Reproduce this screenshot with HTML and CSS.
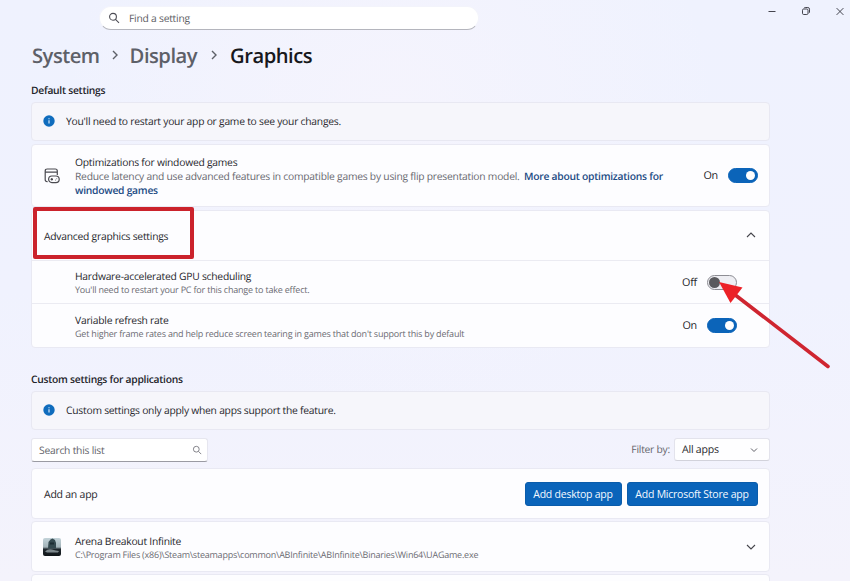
FILE: index.html
```html
<!DOCTYPE html>
<html lang="en">
<head>
<meta charset="utf-8">
<title>Graphics settings</title>
<link rel="stylesheet" href="styles.css">
</head>
<body>
<div class="window">
  <header class="titlebar">
    <div class="find">
      <svg class="find-icon" viewBox="0 0 12 12"><circle cx="5" cy="4.8" r="3.4"/><path d="M7.5 7.3 11 10.8"/></svg>
      <span>Find a setting</span>
    </div>
    <div class="controls">
      <svg viewBox="0 0 10 10"><path d="M1.5 5.5h7"/></svg>
      <svg viewBox="0 0 10 10"><rect x="1.5" y="3" width="5.5" height="5.5" rx="1.2"/><path d="M3 2.2Q3.3 1.5 4.2 1.5H6.8Q8.5 1.5 8.5 3.2V6Q8.5 6.8 7.8 7.1"/></svg>
      <svg viewBox="0 0 10 10"><path d="M1.6 2.1 8.4 8.9M8.4 2.1 1.6 8.9"/></svg>
    </div>
  </header>

  <main class="content">
    <nav class="crumbs">
      <span>System</span>
      <svg viewBox="0 0 8 10"><path d="M2 1 6 5 2 9"/></svg>
      <span>Display</span>
      <svg class="second" viewBox="0 0 8 10"><path d="M2 1 6 5 2 9"/></svg>
      <span class="current">Graphics</span>
    </nav>

    <h2 class="section-title">Default settings</h2>
    <div class="info">
      <svg class="info-icon" viewBox="0 0 12 12"><circle cx="6" cy="6" r="5.7"/><path d="M6 5.3v3.3M6 3.2v1.1"/></svg>
      <span>You'll need to restart your app or game to see your changes.</span>
    </div>

    <section class="card optimizations">
      <svg class="game-icon" viewBox="0 0 16 16"><path d="M3.6 13.7H3.2Q1.2 13.7 1.2 11.7V3Q1.2 1 3.2 1H11.3Q13.3 1 13.3 3V7M1.2 4.2H13.3"/><rect x="4.6" y="8" width="10.6" height="6.6" rx="3.3"/><path d="M6.6 11.3H9M7.8 10.1V12.5"/><path d="M11.3 12.2h.5M12.6 10.6h.5"/></svg>
      <div class="text">
        <div class="label">Optimizations for windowed games</div>
        <div class="desc"><span>Reduce latency and use advanced features in compatible games by using flip presentation model.</span> <a class="link">More about optimizations for</a></div>
        <div class="desc"><a class="link">windowed games</a></div>
      </div>
      <div class="switch-group"><span>On</span><i class="switch on"></i></div>
    </section>

    <section class="card expander">
      <div class="expander-head">
        <span>Advanced graphics settings</span>
        <svg class="chevron" viewBox="0 0 10 8"><path d="M1 6 5 2 9 6"/></svg>
        <div class="highlight"></div>
      </div>
      <div class="row">
        <div class="text">
          <div class="label">Hardware-accelerated GPU scheduling</div>
          <div class="sub">You'll need to restart your PC for this change to take effect.</div>
        </div>
        <div class="switch-group"><span>Off</span><i class="switch"></i></div>
        <svg class="pointer" viewBox="0 0 120 94"><path class="shaft" d="M15 12 109 84.500"/><path class="head" d="M0 0 23.500 5.500 11.500 21Z"/></svg>
      </div>
      <div class="row">
        <div class="text">
          <div class="label">Variable refresh rate</div>
          <div class="sub">Get higher frame rates and help reduce screen tearing in games that don't support this by default</div>
        </div>
        <div class="switch-group"><span>On</span><i class="switch on"></i></div>
      </div>
    </section>

    <h2 class="section-title custom-title">Custom settings for applications</h2>
    <div class="info">
      <svg class="info-icon" viewBox="0 0 12 12"><circle cx="6" cy="6" r="5.700"/><path d="M6 5.300v3.300M6 3.200v1.100"/></svg>
      <span class="lower">Custom settings only apply when apps support the feature.</span>
    </div>

    <div class="tools">
      <div class="search-list">
        <span>Search this list</span>
        <svg viewBox="0 0 10 10"><circle cx="4.300" cy="4.200" r="2.900"/><path d="M6.400 6.300 9.200 9.100"/></svg>
      </div>
      <div class="filter">
        <span class="filter-label">Filter by:</span>
        <div class="select"><span>All apps</span><svg viewBox="0 0 8 6"><path d="M1 1.500 4 4.500 7 1.500"/></svg></div>
      </div>
    </div>

    <section class="card add">
      <span>Add an app</span>
      <div class="buttons">
        <button class="btn">Add desktop app</button>
        <button class="btn store">Add Microsoft Store app</button>
      </div>
    </section>

    <section class="card app">
      <svg class="app-icon" viewBox="0 0 18 18">
        <defs><linearGradient id="sky" x2="0" y2="1"><stop offset="0" stop-color="#c3d3d9"/><stop offset=".5" stop-color="#a3b3b9"/><stop offset=".62" stop-color="#20282e"/><stop offset="1" stop-color="#101519"/></linearGradient></defs>
        <rect width="18" height="18" rx="2" fill="url(#sky)"/>
        <path d="M5 10.500 5.500 4 7.500 1.500 9.500.5 12 2 13 5V10.500Z" fill="#35494f"/>
        <path d="M2 13.500Q5 10.500 9 11.500T16 13L15 14.500H4Z" fill="#7d888d"/>
        <path d="M7 4.500h4v2H7Z" fill="#1d2d33"/>
      </svg>
      <div class="text">
        <div class="label">Arena Breakout Infinite</div>
        <div class="sub path">C:\Program Files (x86)\Steam\steamapps\common\ABInfinite\ABInfinite\Binaries\Win64\UAGame.exe</div>
      </div>
      <svg class="chevron" viewBox="0 0 10 8"><path d="M1 2 5 6 9 2"/></svg>
    </section>
    <section class="card next"></section>
  </main>
</div>
</body>
</html>
```
FILE: styles.css
```css
* { box-sizing: border-box; }
body {
  margin: 0;
  font-family: "Open Sans", "Noto Sans", sans-serif;
  font-size: 10.3px;
  line-height: 14px;
  letter-spacing: -0.235px;
  color: #26262b;
  text-rendering: geometricPrecision;
}
svg { display: block; flex: none; fill: none; stroke: currentColor; overflow: visible; }
.window {
  height: 581px;
  overflow: hidden;
  background:
    radial-gradient(ellipse 330px 300px at 390px 110px, #f5f4fd 0%, rgba(245, 244, 253, 0) 100%),
    linear-gradient(180deg, #eff2fe 0%, #f0f2fe 50%, #f4f3fc 100%);
}

.titlebar { display: flex; justify-content: space-between; height: 40px; padding-left: 99px; }
.find {
  display: flex;
  align-items: center;
  gap: 9px;
  width: 380px;
  height: 24px;
  margin-top: 6px;
  padding-left: 8px;
  border: 1px solid #f3f4fb;
  border-bottom-color: #b4b5bd;
  border-radius: 12px;
  background: #fff;
  color: #5d5d63;
}
.find span { padding-top: 1px; }
.find-icon { width: 12px; height: 12px; stroke: #4c4c54; stroke-width: 1.1; }
.controls { display: flex; gap: 24px; padding: 6px 5.5px 0 0; color: #44454f; }
.controls svg { width: 10px; height: 10px; stroke-width: 1; }

.content { width: 739px; margin-left: 31px; }
.crumbs {
  display: flex;
  align-items: center;
  height: 30px;
  padding-left: 1px;
  font-size: 20.2px;
  line-height: 30px;
  font-weight: 600;
  letter-spacing: -0.5px;
  color: #5d6068;
}
.crumbs svg { width: 8px; height: 10px; margin: 0 11px; stroke-width: 1.4; }
.crumbs .second { margin: 0 12px 0 13px; }
.crumbs .current { color: #17181c; }

.section-title { margin: 14px 0 4px; font-size: 10.3px; line-height: 14px; font-weight: 600; color: #222329; letter-spacing: -0.27px; }
.custom-title { margin: 25px 0 4px; }

.info {
  display: flex;
  align-items: center;
  gap: 11px;
  height: 39px;
  padding-left: 11px;
  border: 1px solid #e8e8f2;
  border-radius: 4px;
  background: #f6f6fb;
}
.info .lower { padding-top: 1px; }
.info-icon { width: 12px; height: 12px; margin-top: -1px; fill: #0f6cbd; stroke: none; }
.info-icon path { stroke: #e9f3fb; stroke-width: 1.1; }

.card {
  border: 1px solid #e9e9f3;
  border-radius: 4px;
  background: #fdfdff;
  margin-top: 3px;
}
.sub { font-size: 9px; line-height: 11px; letter-spacing: -0.197px; color: #6c6c73; white-space: nowrap; }
.sub.path { letter-spacing: -0.225px; }
.desc { color: #68686f; white-space: nowrap; }
.link { font-weight: 600; color: #1b4a83; letter-spacing: -0.25px; }
.desc span + .link { margin-left: 2px; }

.optimizations { display: flex; align-items: center; height: 63px; padding: 0 11px 0 12px; }
.game-icon { width: 16px; height: 16px; margin-right: 15px; stroke: #4a4a50; stroke-width: 1.2; }
.optimizations .text { width: 600px; padding-top: 2px; }

.switch-group { display: flex; align-items: center; gap: 10px; margin-left: auto; font-size: 10.8px; }
.switch-group span { padding-top: 1px; }
.switch { position: relative; width: 30px; height: 15px; border: 1px solid #8d8d94; border-radius: 8px; background: #eeeef3; }
.switch::after { content: ""; position: absolute; left: 1px; top: 1px; width: 11px; height: 11px; border-radius: 50%; background: #5a5a5e; }
.switch.on { border-color: #0b64b9; background: #0b64b9; }
.switch.on::after { left: 17px; top: 2px; width: 9px; height: 9px; background: #fff; }

.expander-head { position: relative; display: flex; align-items: center; justify-content: space-between; height: 49px; padding: 3px 13px 0 12px; }
.chevron { width: 10px; height: 8px; stroke: #45454b; stroke-width: 1.1; }
.expander-head .chevron { margin-top: -5px; }
.highlight { position: absolute; left: 1px; top: -4px; width: 161px; height: 52px; border: 4px solid #cb232c; border-radius: 2px; }
.row { position: relative; display: flex; align-items: center; height: 43px; padding: 0 32px 0 43px; border-top: 1px solid #ebebf2; }
.row .label, .app .label { line-height: 13px; }
.row .text { padding-top: 2px; }
.row + .row { height: 44px; }
.pointer { position: absolute; z-index: 2; left: 687px; top: 21px; width: 120px; height: 94px; stroke: none; }
.pointer .shaft { stroke: #cf2530; stroke-width: 3.6; stroke-linecap: round; }
.pointer .head { fill: #ec2127; }

.tools { display: flex; justify-content: space-between; margin-top: 8px; height: 24px; }
.search-list {
  display: flex;
  align-items: center;
  justify-content: space-between;
  width: 177px;
  padding: 0 5px 0 7px;
  border: 1px solid #e6e6ef;
  border-bottom-color: #9a9aa3;
  border-radius: 3px;
  background: #fff;
  color: #626268;
}
.search-list span, .select span { padding-top: 1px; }
.search-list svg { width: 10px; height: 10px; stroke: #85858c; }
.filter { display: flex; align-items: center; gap: 4px; height: 23px; }
.filter-label { color: #65656c; }
.select {
  display: flex;
  align-items: center;
  justify-content: space-between;
  width: 96px;
  height: 23px;
  padding: 0 11px 0 7px;
  border: 1px solid #e3e3ec;
  border-bottom-color: #d2d2db;
  border-radius: 3px;
  background: #fefeff;
  font-size: 10.6px;
}
.select svg { width: 8px; height: 6px; stroke: #606068; }

.add { display: flex; align-items: center; justify-content: space-between; height: 51px; margin-top: 6px; padding: 0 11.5px 0 12px; font-size: 10.5px; }
.add > span { padding-top: 2px; }
.buttons { display: flex; gap: 5px; }
.btn {
  width: 97px;
  height: 24px;
  padding: 0;
  border: 1px solid #0a5cab;
  border-radius: 3px;
  background: #0a64ba;
  color: #f4f9ff;
  font: inherit;
  letter-spacing: inherit;
}
.btn.store { width: 131px; }

.app { display: flex; align-items: center; height: 51px; margin-top: 2px; padding: 0 13px 0 11px; }
.app .text { padding-top: 2px; }
.app-icon { width: 18px; height: 18px; margin-right: 14px; stroke: none; }
.app .chevron { margin-left: auto; }
.next { height: 40px; margin-top: 2px; }
```
